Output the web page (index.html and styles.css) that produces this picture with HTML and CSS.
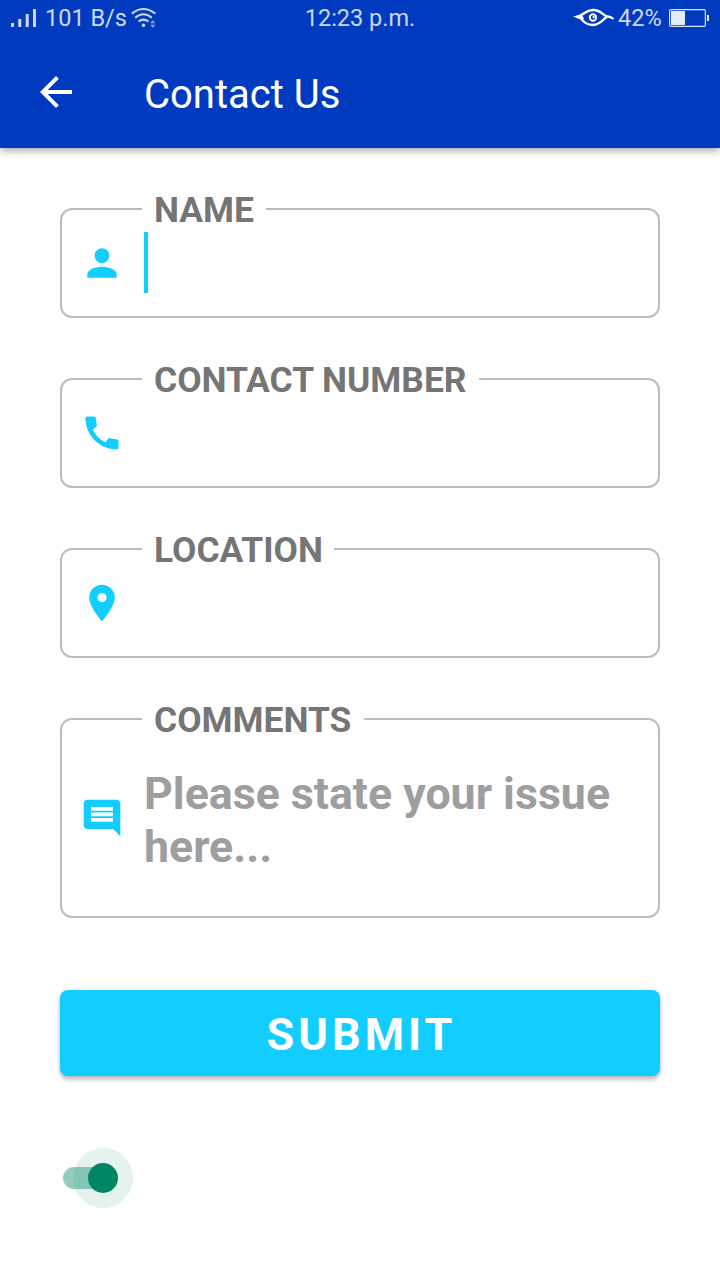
FILE: index.html
```html
<!DOCTYPE html>
<html lang="en">
<head>
<meta charset="utf-8">
<title>Contact Us</title>
<link rel="stylesheet" href="styles.css">
</head>
<body>
<header class="header">
  <div class="status">
    <div class="status-left">
      <svg class="signal" width="26" height="18" viewBox="0 0 26 18"><path d="M0 14h3v4H0zM7.300 10h3v8h-3zM14.700 5h3v13h-3zM22 0h3v18h-3z"/></svg>
      <span class="speed">101 B/s</span>
      <svg class="wifi" width="26" height="20" viewBox="0 0 26 20"><g fill="none" stroke="#cdd8f3" stroke-width="2"><path d="M.8 5.600Q12.500-3.500 24.300 5.600"/><path d="M4.200 9.800Q12.500 2.800 20.800 9.800"/><path d="M7.600 13.600Q12.500 9.600 17.400 13.600"/></g><circle cx="12.500" cy="17.300" r="1.700"/><path class="dim" d="M19 15.200l2.700-3 2.700 3zM19 16.800l2.700 3 2.700-3z"/></svg>
    </div>
    <time class="clock">12:23 p.m.</time>
    <div class="status-right">
      <svg class="eye" width="42" height="20" viewBox="0 0 42 20"><path fill="none" stroke="#fff" stroke-width="2.300" d="M3 9.200C10 7.500 12.500 2 20.500 2 28 2 30 7.500 34.500 8.500M7 9.500C11 14.500 14 17 20 17 27 17 29.500 12 34 8.500Q37.500 8.300 40.500 11"/><path fill="#fff" d="M0 8.600L9 6.500 11 11 7 11.300z"/><circle cx="20" cy="9.500" r="3.200" fill="none" stroke="#fff" stroke-width="1.900"/><circle cx="20.700" cy="9" r="1.200" fill="#fff"/></svg>
      <span class="percent">42%</span>
      <svg class="battery" width="41" height="18" viewBox="0 0 41 18"><rect x=".6" y=".6" width="35.800" height="16.800" rx="1.500" fill="none" stroke="#dce4f7" stroke-width="1.200"/><path fill="#e5ebf9" d="M2 2h14v14H2zM38 6h2v6h-2z"/></svg>
    </div>
  </div>
  <div class="toolbar">
    <svg class="back" width="48" height="48" viewBox="0 0 24 24"><path d="M20 11H7.830l5.590-5.590L12 4l-8 8 8 8 1.410-1.410L7.830 13H20v-2z"/></svg>
    <h1 class="title">Contact Us</h1>
  </div>
</header>
<main class="form">
  <div class="field">
    <label class="label label-name">NAME</label>
    <svg class="icon" viewBox="0 0 24 24"><path d="M12 12c2.210 0 4-1.790 4-4s-1.790-4-4-4-4 1.790-4 4 1.790 4 4 4zm0 2c-2.670 0-8 1.340-8 4v2h16v-2c0-2.660-5.330-4-8-4z"/></svg>
    <span class="caret"></span>
  </div>
  <div class="field">
    <label class="label label-number">CONTACT NUMBER</label>
    <svg class="icon" viewBox="0 0 24 24"><path d="M20.010 15.380c-1.230 0-2.420-.2-3.530-.56-.35-.12-.74-.03-1.010.24l-1.570 1.970c-2.830-1.350-5.480-3.900-6.890-6.830l1.950-1.660c.27-.28.35-.67.24-1.020-.37-1.110-.56-2.300-.56-3.530 0-.54-.45-.99-.99-.99H4.190C3.650 3 3 3.240 3 3.990 3 13.280 10.730 21 20.010 21c.71 0 .99-.63.99-1.180v-3.450c0-.54-.45-.99-.99-.99z"/></svg>
  </div>
  <div class="field">
    <label class="label label-location">LOCATION</label>
    <svg class="icon" viewBox="0 0 24 24"><path d="M12 2C8.130 2 5 5.130 5 9c0 5.250 7 13 7 13s7-7.750 7-13c0-3.870-3.130-7-7-7zm0 9.500a2.500 2.500 0 0 1 0-5 2.500 2.500 0 0 1 0 5z"/></svg>
  </div>
  <div class="field field-tall">
    <label class="label label-comments">COMMENTS</label>
    <svg class="icon" viewBox="0 0 24 24"><path d="M21.990 4c0-1.100-.89-2-1.990-2H4c-1.100 0-2 .9-2 2v12c0 1.100.9 2 2 2h14l4 4-.01-18zM18 14H6v-2h12v2zm0-3H6V9h12v2zm0-3H6V6h12v2z"/></svg>
    <p class="hint">Please state your issue here...</p>
  </div>
  <button class="submit">SUBMIT</button>
  <div class="switch"><span class="track"></span><span class="halo"></span><span class="thumb"></span></div>
</main>
</body>
</html>
```
FILE: styles.css
```css
* { box-sizing: border-box; }
body { margin: 0; width: 720px; height: 1280px; overflow: hidden; background: #fff; font-family: Roboto, sans-serif; }
svg { display: block; flex: none; }
.header { height: 148px; background: #003bbf; box-shadow: 0 2px 8px rgba(0,0,0,.4); }
.status { height: 36px; display: grid; grid-template-columns: 1fr auto 1fr; color: #cdd8f3; fill: #cdd8f3; font-size: 23.5px; line-height: 36px; white-space: nowrap; }
.status-left, .status-right { display: flex; }
.status-left { padding-left: 11px; }
.status-right { justify-content: flex-end; padding-right: 10px; }
.signal { margin-top: 9px; }
.speed { width: 83px; margin-left: 8px; }
.wifi { margin: 8px 0 0 3px; }
.dim { fill: #8aa5e1; }
.eye { margin-top: 8px; }
.percent { width: 43px; margin: 0 8px 0 3px; }
.battery { margin-top: 9px; }
.toolbar { height: 112px; display: flex; align-items: center; padding-left: 32px; }
.back { fill: #fff; }
.title { margin: 6px 0 0 64px; font-size: 40px; font-weight: 400; line-height: 48px; color: #fff; }
.form { padding: 60px 60px 0; display: flex; flex-direction: column; }
.field { position: relative; height: 110px; margin-bottom: 60px; padding-left: 18px; display: flex; align-items: center; border: 2px solid #bdbdbd; border-radius: 12px; }
.field-tall { height: 200px; margin-bottom: 72px; }
.label { position: absolute; left: 80px; top: -21px; height: 42px; padding-left: 12px; background: #fff; color: #757575; font-size: 35.4px; font-weight: 700; line-height: 42px; white-space: nowrap; }
.label-name { width: 124px; }
.label-number { width: 337px; }
.label-location { width: 192px; }
.label-comments { width: 222px; }
.icon { width: 44px; height: 44px; fill: #12cdff; }
.caret { width: 4px; height: 61px; margin: 0 0 1px 20px; background: #12cdff; }
.hint { width: 490px; margin: 5px 0 0 20px; color: #9e9e9e; font-size: 44.7px; font-weight: 700; line-height: 53px; }
.submit { height: 86px; padding: 3px 0 0 3px; border: 0; border-radius: 8px; background: #12cdff; box-shadow: 0 4px 4px rgba(0,0,0,.2), 0 1px 4px rgba(0,0,0,.14); color: #fff; font: 700 45px/83px Roboto, sans-serif; letter-spacing: 4px; }
.switch { position: relative; width: 80px; height: 60px; margin-top: 72px; }
.track, .halo, .thumb { position: absolute; }
.track { left: 3px; top: 19px; width: 54px; height: 22px; border-radius: 11px; background: #94cdbe; }
.halo { left: 12.5px; top: 0; width: 60px; height: 60px; border-radius: 50%; background: rgba(0,134,99,.1); }
.thumb { left: 27.5px; top: 15px; width: 30px; height: 30px; border-radius: 50%; background: #008663; }
```
